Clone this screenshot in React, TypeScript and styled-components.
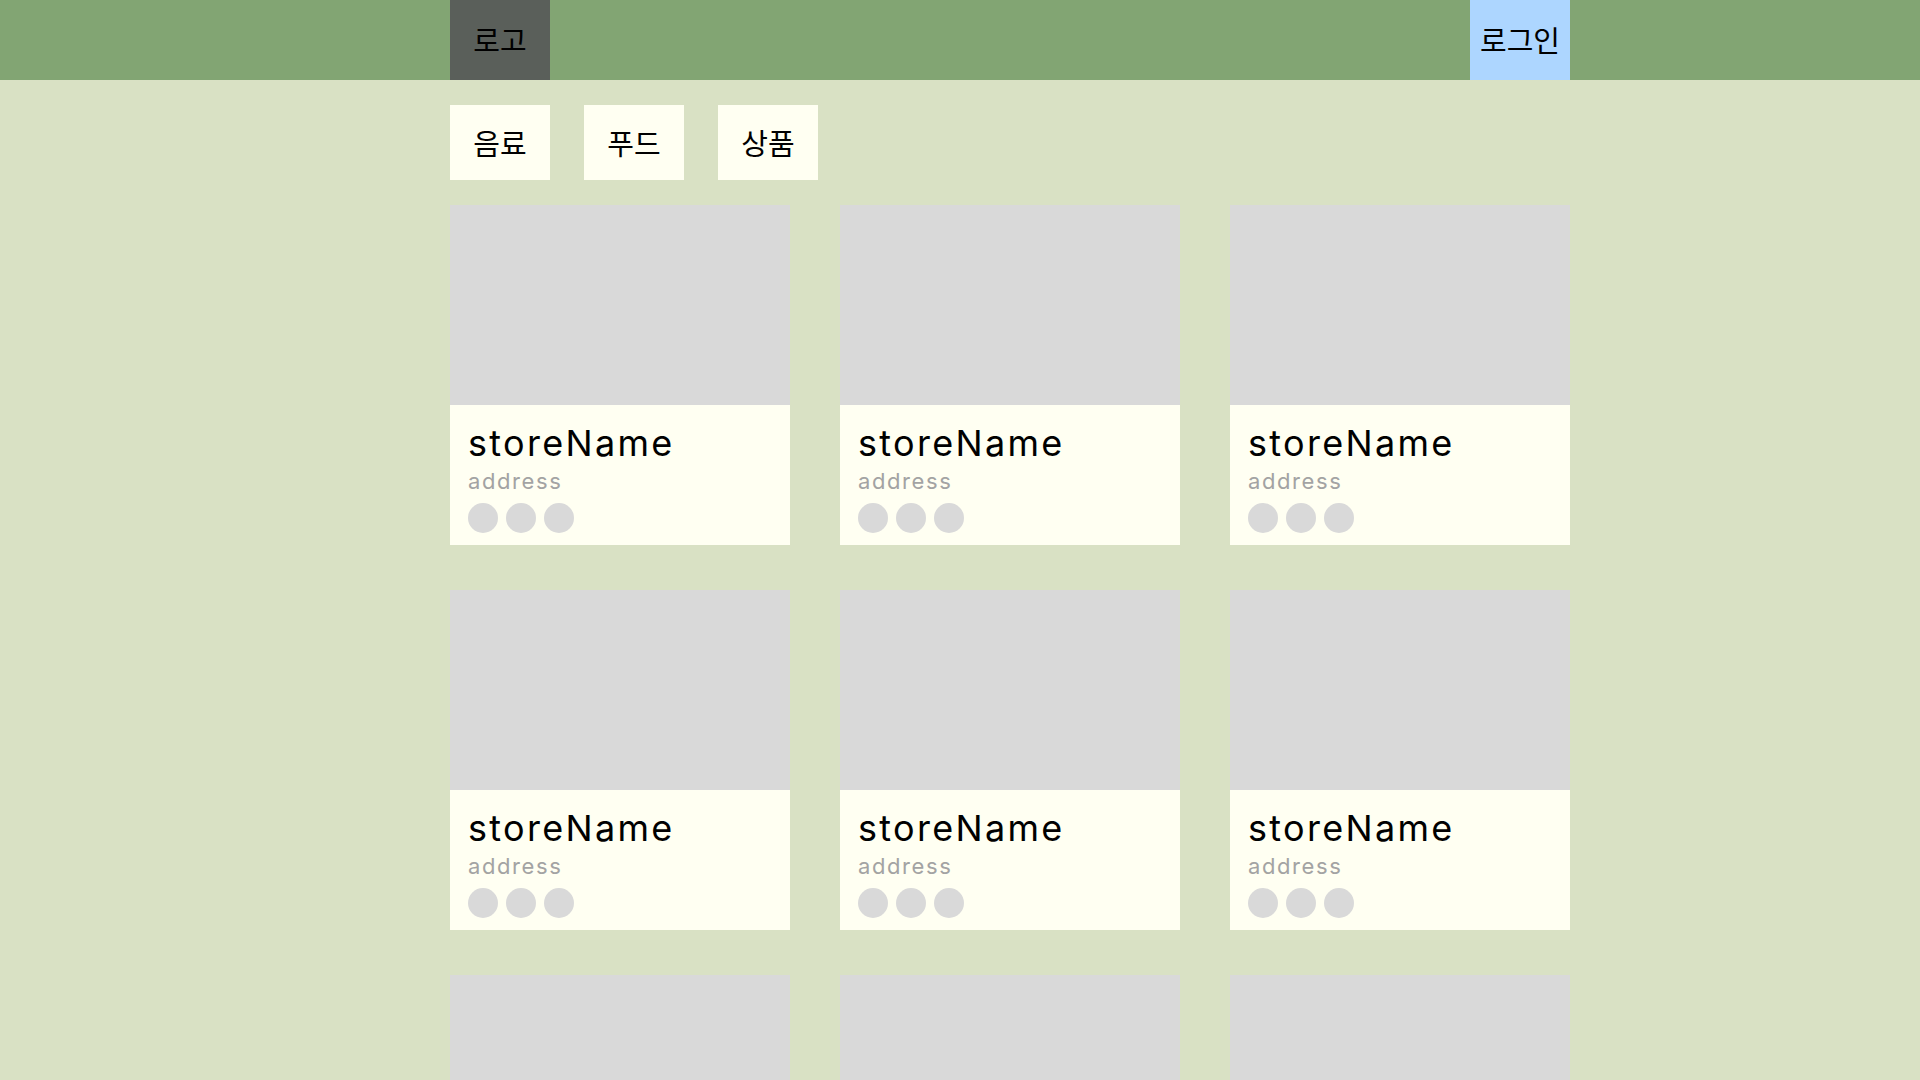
import React from "react";
import styled, { createGlobalStyle } from "styled-components";

const GlobalStyle = createGlobalStyle`
  * {
    box-sizing: border-box;
  }

  body {
    margin: 0;
    background-color: #d9e1c4;
    font-family: "Inter", "Noto Sans CJK KR", sans-serif;
    color: #000;
  }
`;

const categories = ["음료", "푸드", "상품"];
const stores = Array.from({ length: 9 }, (_, i) => ({
  id: i,
  name: "storeName",
  address: "address",
}));

const App = () => {
  return (
    <>
      <GlobalStyle />
      <Header>
        <HeaderInner>
          <HeaderButton $tone="logo">로고</HeaderButton>
          <HeaderButton $tone="login">로그인</HeaderButton>
        </HeaderInner>
      </Header>
      <Main>
        <CategoryBar>
          {categories.map((c) => (
            <CategoryButton key={c}>{c}</CategoryButton>
          ))}
        </CategoryBar>
        <StoreGrid>
          {stores.map((s) => (
            <StoreCard key={s.id}>
              <Thumb />
              <Info>
                <StoreName>{s.name}</StoreName>
                <Address>{s.address}</Address>
                <Tags>
                  <Dot />
                  <Dot />
                  <Dot />
                </Tags>
              </Info>
            </StoreCard>
          ))}
        </StoreGrid>
      </Main>
    </>
  );
};

/* Header */
const Header = styled.header`
  height: 80px;
  background-color: #82a573;
`;

const HeaderInner = styled.div`
  width: 1120px;
  height: 100%;
  margin-left: 450px;
  display: flex;
  justify-content: space-between;
`;

const HeaderButton = styled.div<{ $tone: "logo" | "login" }>`
  width: 100px;
  height: 80px;
  padding-bottom: 2px;
  display: flex;
  align-items: center;
  justify-content: center;
  font-size: 29px;
  background-color: ${(p) => (p.$tone === "logo" ? "#5a5f5a" : "#add6ff")};
  color: #000;
`;

/* Body */
const Main = styled.main`
  width: 1120px;
  margin-left: 450px;
  padding-top: 25px;
`;

const CategoryBar = styled.nav`
  display: flex;
  gap: 34px;
  margin-bottom: 25px;
`;

const CategoryButton = styled.div`
  width: 100px;
  height: 75px;
  padding-bottom: 2px;
  display: flex;
  align-items: center;
  justify-content: center;
  background-color: #fffff2;
  font-size: 29px;
`;

const StoreGrid = styled.div`
  display: grid;
  grid-template-columns: repeat(3, 340px);
  column-gap: 50px;
  row-gap: 45px;
`;

const StoreCard = styled.div`
  width: 340px;
  height: 340px;
  display: flex;
  flex-direction: column;
`;

const Thumb = styled.div`
  height: 200px;
  background-color: #d9d9d9;
`;

const Info = styled.div`
  flex: 1;
  background-color: #fffff2;
  padding: 17px 18px 12px;
  display: flex;
  flex-direction: column;
`;

const StoreName = styled.div`
  font-size: 36px;
  line-height: 42px;
  letter-spacing: 2.3px;
`;

const Address = styled.div`
  margin-top: 4px;
  font-size: 22px;
  line-height: 26px;
  letter-spacing: 1.6px;
  color: #a3a3a3;
`;

const Tags = styled.div`
  display: flex;
  gap: 8px;
  margin-top: 9px;
`;

const Dot = styled.span`
  width: 30px;
  height: 30px;
  border-radius: 50%;
  background-color: #d9d9d9;
`;

export default App;
